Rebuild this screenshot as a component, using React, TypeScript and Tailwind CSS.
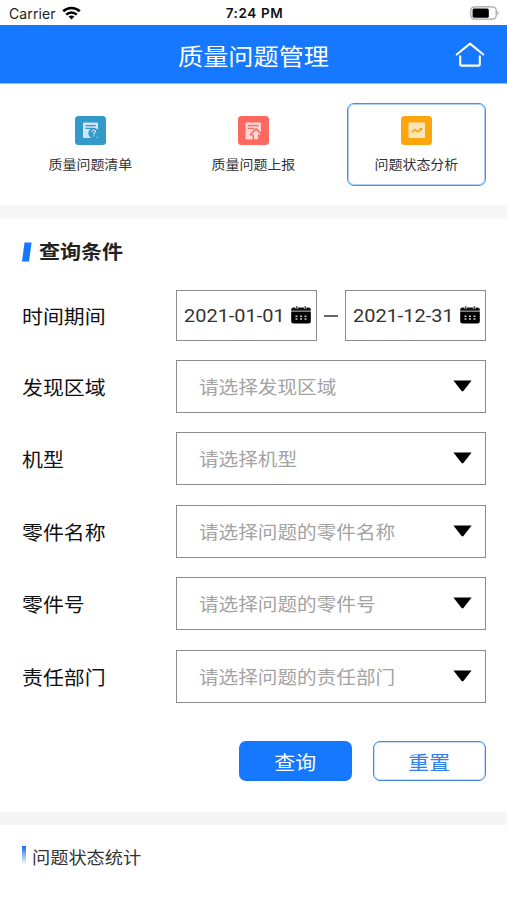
import React from "react";

const tabText =
  "mt-[11px] text-[12.8px] leading-[18px] scale-x-[1.09] text-[#333] whitespace-nowrap";
const labelText =
  "w-[154px] shrink-0 pt-[6px] text-[19.2px] text-[#111] whitespace-nowrap";

function Wifi() {
  return (
    <svg className="-mt-[2px]" width="19" height="14" viewBox="0 0 19 14" fill="none" stroke="#000" strokeWidth="2.5">
      <path d="M1.2 5.2C6 .9 13 .9 17.8 5.2" />
      <path d="M4.2 8.6C7.2 5.7 11.8 5.7 14.8 8.6" />
      <path d="M9.5 13.4 6.6 10.6C8.3 9.2 10.7 9.2 12.4 10.6Z" fill="#000" stroke="none" />
    </svg>
  );
}

function Battery() {
  return (
    <svg className="-mt-[2px]" width="30" height="14" viewBox="0 0 30 14">
      <rect x=".8" y=".8" width="25.4" height="12.4" rx="3.6" fill="#fff" stroke="#a3a3a3" strokeWidth="1.2" />
      <rect x="2.6" y="2.4" width="16.2" height="9.4" rx="1.6" fill="#000" />
      <path d="M27.5 4.7q2.2 2.3 0 4.6Z" fill="#a3a3a3" />
    </svg>
  );
}

function Home() {
  return (
    <svg width="30" height="26" viewBox="0 0 30 26" fill="none" stroke="#fff" strokeWidth="2.1" strokeLinecap="round" strokeLinejoin="round">
      <path d="M1.7 12.5 15 1.6l13.3 10.9" />
      <path d="M5.2 14.4v8.2q0 1 1 1h17.6q1 0 1-1v-8.2" />
    </svg>
  );
}

function ListIcon() {
  return (
    <svg width="31" height="29" viewBox="0 0 31 29">
      <rect width="31" height="29" rx="3.5" fill="#3399c8" />
      <path d="M9 6.5h13q1 0 1 1V21q0 1-1 1H9q-1 0-1-1V7.5q0-1 1-1Z" fill="#cfe5fb" />
      <path d="M10.5 9.6h10.2M10.5 12.4h7" stroke="#3399c8" strokeWidth="1.1" />
      <circle cx="18.7" cy="17.2" r="5.4" fill="#3399c8" />
      <path d="M16.8 15.8q.2-1.8 1.9-1.8 1.8 0 1.8 1.6 0 1.1-1.7 1.8v1M18.8 19.3v1.2" fill="none" stroke="#cfe5fb" strokeWidth="1.2" />
    </svg>
  );
}

function ReportIcon() {
  return (
    <svg width="31" height="29" viewBox="0 0 31 29">
      <rect width="31" height="29" rx="3.5" fill="#fd6860" />
      <rect x="7.5" y="6.5" width="15.5" height="17" rx="1" fill="#ffd4d2" />
      <path d="M10 9.6h10.5M10 12.4h6" stroke="#fd6860" strokeWidth="1.1" />
      <path d="M18 11.8 11.8 18v1.5h2.7V24H23.2V16.5Z" fill="#fd6860" />
      <path d="m18 14 4.8 4.5h-2.7v4.8h-4.2v-4.8h-2.7Z" fill="#ffd4d2" />
    </svg>
  );
}

function ChartIcon() {
  return (
    <svg width="31" height="29" viewBox="0 0 31 29">
      <rect width="31" height="29" rx="3.5" fill="#fda50c" />
      <rect x="7.5" y="6.5" width="16.5" height="15.5" rx="1.2" fill="#f8e5b8" />
      <path d="m10.7 16.5 3.1-2.9 3 2.2 3.3-3" fill="none" stroke="#fda50c" strokeWidth="1.7" />
      <path d="m18.1 11.9 3.3-.2-.5 3.3Z" fill="#fda50c" />
    </svg>
  );
}

function Calendar() {
  return (
    <svg className="-mt-[1px] shrink-0" width="20" height="18" viewBox="0 0 20 18">
      <path d="M2.5 1.5H17.5Q19.8 1.5 19.8 3.8V4.8H.2V3.8Q.2 1.5 2.5 1.5Z" fill="#111" />
      <path d="M.2 5.6h19.6V15q0 2.5-2.5 2.5H2.7Q.2 17.5.2 15Z" fill="#000" />
      <path d="M5.8 0v2.8M14.2 0v2.8" stroke="#fff" strokeWidth="2.6" />
      <path d="M5.8.2v2.6M14.2.2v2.6" stroke="#111" strokeWidth="1.2" />
      <path d="M4.5 10.2h11M4.5 13h11" stroke="#ccc" strokeWidth="1.5" strokeDasharray="2 2.5" />
    </svg>
  );
}

function DateField({ value }: { value: string }) {
  return (
    <div className="flex h-[51px] w-[141px] items-center border border-[#8c8c8c] pl-[6.5px]">
      <span className="w-[107px] shrink-0 text-[18.4px] text-[#333] whitespace-nowrap">
        <span className="inline-block origin-left scale-x-[1.085]">{value}</span>
      </span>
      <Calendar />
    </div>
  );
}

function SelectRow({ label, placeholder }: { label: string; placeholder: string }) {
  return (
    <div className="flex h-[53px] items-center">
      <div className={labelText}>
        <span className="inline-block origin-left scale-x-[1.09]">{label}</span>
      </div>
      <div className="flex h-[53px] w-[310px] items-center justify-between border border-[#8c8c8c] pr-[13px] pl-[22px]">
        <span className="origin-left scale-x-[1.09] pt-[2px] text-[18px] whitespace-nowrap text-[#a3a3a3]">{placeholder}</span>
        <svg className="-mt-[1px]" width="19" height="12" viewBox="0 0 19 12">
          <path d="M.4.4h18.2L10.4 11q-.9.9-1.8 0Z" fill="#000" />
        </svg>
      </div>
    </div>
  );
}

const rows = [
  { label: "发现区域", placeholder: "请选择发现区域" },
  { label: "机型", placeholder: "请选择机型" },
  { label: "零件名称", placeholder: "请选择问题的零件名称" },
  { label: "零件号", placeholder: "请选择问题的零件号" },
  { label: "责任部门", placeholder: "请选择问题的责任部门" },
];

export default function App() {
  return (
    <div className="h-[900px] w-[507px] overflow-hidden bg-white font-[Roboto,'Noto_Sans_CJK_SC',sans-serif]">
      <div className="grid h-[25px] grid-cols-3 items-center pt-[2px] pr-[7px] pl-[9px] font-[Inter,sans-serif]">
        <div className="flex items-center gap-[6px] text-[14px] tracking-[0.1px] text-[#222]">
          Carrier <Wifi />
        </div>
        <div className="text-center text-[13.5px] font-semibold tracking-[0.6px] text-[#111]">7:24 PM</div>
        <div className="flex justify-end">
          <Battery />
        </div>
      </div>

      <header className="grid h-[59px] grid-cols-[60px_1fr_60px] items-center border-b border-[#8fc0ff] bg-[#1677ff]">
        <span />
        <h1 className="scale-x-[1.09] pt-[9px] text-center text-[23.1px] text-white">质量问题管理</h1>
        <div className="pt-[2px] pl-[8px]">
          <Home />
        </div>
      </header>

      <nav className="flex h-[121px] justify-between px-[21px] pt-[19px]">
        <div className="flex h-[83px] w-[139px] flex-col items-center pt-[13px]">
          <ListIcon />
          <span className={tabText}>质量问题清单</span>
        </div>
        <div className="flex h-[83px] w-[139px] flex-col items-center pt-[13px]">
          <ReportIcon />
          <span className={tabText}>质量问题上报</span>
        </div>
        <div className="flex h-[83px] w-[139px] flex-col items-center rounded-[7px] border border-[#4b8ee8] pt-[12px] shadow-[inset_0_0_0_1px_#b5d0f6]">
          <ChartIcon />
          <span className={tabText}>问题状态分析</span>
        </div>
      </nav>
      <div className="h-[13px] bg-[#f7f7f7]" />

      <section className="h-[594px] pl-[22px]">
        <div className="flex h-[72px] items-center pb-[5px]">
          <svg width="10" height="20" viewBox="0 0 10 20">
            <path d="M2.5.5H9.6L7 19.5H0Z" fill="#1677ff" />
          </svg>
          <h2 className="ml-[7px] origin-left scale-x-[1.09] pt-[4px] text-[19.3px] font-bold text-[#222]">查询条件</h2>
        </div>
        <div className="flex h-[51px] items-center">
          <div className={labelText}>
            <span className="inline-block origin-left scale-x-[1.09]">时间期间</span>
          </div>
          <DateField value="2021-01-01" />
          <div className="mx-[7px] h-[2px] w-[14px] bg-[#666]" />
          <DateField value="2021-12-31" />
        </div>
        <div className="mt-[19px] flex flex-col gap-[19.4px]">
          {rows.map((r) => (
            <SelectRow key={r.label} {...r} />
          ))}
        </div>
        <div className="mt-[38.4px] flex justify-end gap-[21px] pr-[21px] text-[19.2px]">
          <button className="h-[40px] w-[113px] rounded-[7px] bg-[#1677ff] pt-[6px] text-white">
            <span className="inline-block scale-x-[1.09]">查询</span>
          </button>
          <button className="h-[40px] w-[113px] rounded-[7px] border border-[#3f86e0] pt-[6px] text-[#3181ec] shadow-[inset_0_0_0_1px_#c9defa]">
            <span className="inline-block scale-x-[1.09]">重置</span>
          </button>
        </div>
      </section>
      <div className="h-[13px] bg-[#f5f5f5]" />

      <section className="flex items-start pt-[21px] pl-[22px]">
        <div className="h-[19px] w-[4px] bg-linear-to-b from-[#1463f0] to-white" />
        <h3 className="mt-[1px] ml-[6px] origin-left scale-x-[1.09] text-[16.7px] leading-[24px] text-[#333]">问题状态统计</h3>
      </section>
    </div>
  );
}
